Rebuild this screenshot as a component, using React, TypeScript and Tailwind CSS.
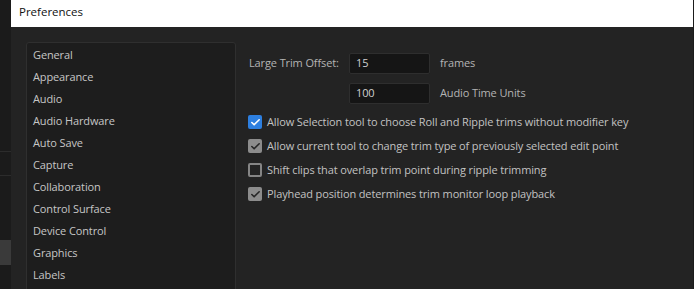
import { Check } from "lucide-react";

const categories = [
  "General",
  "Appearance",
  "Audio",
  "Audio Hardware",
  "Auto Save",
  "Capture",
  "Collaboration",
  "Control Surface",
  "Device Control",
  "Graphics",
  "Labels",
];

const options = [
  { label: "Allow Selection tool to choose Roll and Ripple trims without modifier key", state: "on" },
  { label: "Allow current tool to change trim type of previously selected edit point", state: "dim" },
  { label: "Shift clips that overlap trim point during ripple trimming", state: "off" },
  { label: "Playhead position determines trim monitor loop playback", state: "dim" },
];

const Box = ({ state }: { state: string }) => {
  if (state === "on") {
    return (
      <span className="w-[14px] h-[14px] shrink-0 rounded-[2px] bg-[#2d7fe0] flex items-center justify-center">
        <Check className="w-[11px] h-[11px] text-white" strokeWidth={3.5} />
      </span>
    );
  }
  if (state === "dim") {
    return (
      <span className="w-[14px] h-[14px] shrink-0 rounded-[2px] bg-[#8c8c8c] flex items-center justify-center">
        <Check className="w-[11px] h-[11px] text-[#262626]" strokeWidth={3.5} />
      </span>
    );
  }
  return <span className="w-[14px] h-[14px] shrink-0 rounded-[2px] border-2 border-[#858585]" />;
};

const App = () => {
  return (
    <div className="w-[694px] h-[289px] flex bg-[#1b1b1b] overflow-hidden font-['Open_Sans',sans-serif]">
      <div className="w-[11px] shrink-0 flex flex-col">
        <div className="h-[151px] shrink-0" />
        <div className="h-[25px] shrink-0 border-y border-[#2c2c2c]" />
        <div className="h-[64px] shrink-0" />
        <div className="h-[25px] shrink-0 bg-[#3a3a3a]" />
      </div>
      <div className="w-[682px] flex flex-col bg-[#232323]">
        <div className="h-[27px] shrink-0 bg-white flex items-center pl-[8px] pb-[3px] text-[11.5px] text-[#111]">
          Preferences
        </div>
        <div className="flex pt-[15px] pl-[15px] tracking-[-0.12px]">
          <div className="w-[210px] h-[260px] shrink-0 bg-[#1d1d1d] border border-[#2f2f2f] rounded-[3px] pt-[1px] pl-[6px]">
            {categories.map((c) => (
              <div key={c} className="h-[22px] flex items-center text-[11px] text-[#c6c6c6]">
                {c}
              </div>
            ))}
          </div>
          <div className="flex flex-col pl-[13px] pt-[11px] text-[11px] text-[#b4b4b4]">
            <div className="flex items-center h-[21px]">
              <span className="w-[100px]">Large Trim Offset:</span>
              <span className="w-[81px] h-[21px] bg-[#151515] border border-[#2e2e2e] rounded-[2px] flex items-center pl-[6px] text-[#d0d0d0]">
                15
              </span>
              <span className="pl-[10px]">frames</span>
            </div>
            <div className="flex items-center h-[21px] mt-[9px]">
              <span className="w-[100px]" />
              <span className="w-[81px] h-[21px] bg-[#151515] border border-[#2e2e2e] rounded-[2px] flex items-center pl-[6px] text-[#d0d0d0]">
                100
              </span>
              <span className="pl-[10px]">Audio Time Units</span>
            </div>
            <div className="flex flex-col mt-[6px] -ml-[1px]">
              {options.map((o) => (
                <div key={o.label} className="h-[24px] flex items-center gap-[5px] text-[#c2c2c2]">
                  <Box state={o.state} />
                  <span>{o.label}</span>
                </div>
              ))}
            </div>
          </div>
        </div>
      </div>
    </div>
  );
};

export default App;
